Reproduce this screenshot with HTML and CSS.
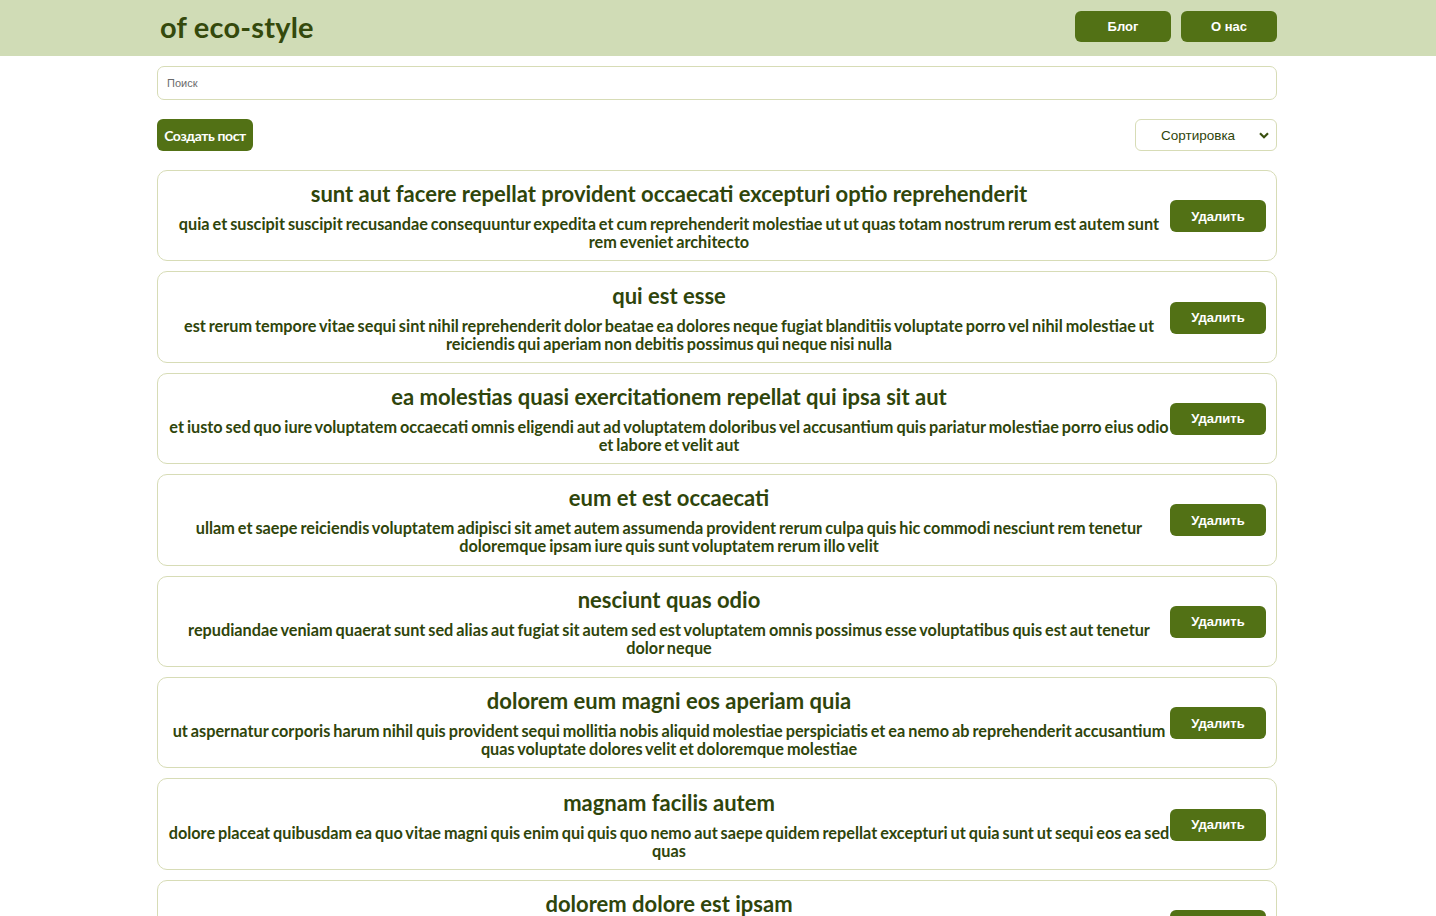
FILE: index.html
```html
<!DOCTYPE html>
<html lang="ru">
<head>
<meta charset="utf-8">
<title>of eco-style</title>
<link rel="stylesheet" href="styles.css">
</head>
<body>
<header class="header">
  <div class="header-inner">
    <div class="logo">of eco-style</div>
    <nav class="nav">
      <button class="nav-btn">Блог</button>
      <button class="nav-btn">О нас</button>
    </nav>
  </div>
</header>
<main class="main">
  <input class="search" type="text" placeholder="Поиск">
  <div class="toolbar">
    <button class="create-btn">Создать пост</button>
    <div class="sort">
      <span class="sort-label">Сортировка</span>
      <svg class="sort-arrow" width="10" height="7" viewBox="0 0 10 7"><path d="M1 1.2 L5 5.2 L9 1.2" fill="none" stroke="#3a5010" stroke-width="2.2"/></svg>
    </div>
  </div>
  <div class="posts">
    <div class="post">
      <div class="post-body">
        <h2 class="post-title">sunt aut facere repellat provident occaecati excepturi optio reprehenderit</h2>
        <p class="post-text">quia et suscipit suscipit recusandae consequuntur expedita et cum reprehenderit molestiae ut ut quas totam nostrum rerum est autem sunt rem eveniet architecto</p>
      </div>
      <button class="del-btn">Удалить</button>
    </div>
    <div class="post">
      <div class="post-body">
        <h2 class="post-title">qui est esse</h2>
        <p class="post-text">est rerum tempore vitae sequi sint nihil reprehenderit dolor beatae ea dolores neque fugiat blanditiis voluptate porro vel nihil molestiae ut reiciendis qui aperiam non debitis possimus qui neque nisi nulla</p>
      </div>
      <button class="del-btn">Удалить</button>
    </div>
    <div class="post">
      <div class="post-body">
        <h2 class="post-title">ea molestias quasi exercitationem repellat qui ipsa sit aut</h2>
        <p class="post-text">et iusto sed quo iure voluptatem occaecati omnis eligendi aut ad voluptatem doloribus vel accusantium quis pariatur molestiae porro eius odio et labore et velit aut</p>
      </div>
      <button class="del-btn">Удалить</button>
    </div>
    <div class="post">
      <div class="post-body">
        <h2 class="post-title">eum et est occaecati</h2>
        <p class="post-text">ullam et saepe reiciendis voluptatem adipisci sit amet autem assumenda provident rerum culpa quis hic commodi nesciunt rem tenetur doloremque ipsam iure quis sunt voluptatem rerum illo velit</p>
      </div>
      <button class="del-btn">Удалить</button>
    </div>
    <div class="post">
      <div class="post-body">
        <h2 class="post-title">nesciunt quas odio</h2>
        <p class="post-text">repudiandae veniam quaerat sunt sed alias aut fugiat sit autem sed est voluptatem omnis possimus esse voluptatibus quis est aut tenetur dolor neque</p>
      </div>
      <button class="del-btn">Удалить</button>
    </div>
    <div class="post">
      <div class="post-body">
        <h2 class="post-title">dolorem eum magni eos aperiam quia</h2>
        <p class="post-text">ut aspernatur corporis harum nihil quis provident sequi mollitia nobis aliquid molestiae perspiciatis et ea nemo ab reprehenderit accusantium quas voluptate dolores velit et doloremque molestiae</p>
      </div>
      <button class="del-btn">Удалить</button>
    </div>
    <div class="post">
      <div class="post-body">
        <h2 class="post-title">magnam facilis autem</h2>
        <p class="post-text">dolore placeat quibusdam ea quo vitae magni quis enim qui quis quo nemo aut saepe quidem repellat excepturi ut quia sunt ut sequi eos ea sed quas</p>
      </div>
      <button class="del-btn">Удалить</button>
    </div>
    <div class="post">
      <div class="post-body">
        <h2 class="post-title">dolorem dolore est ipsam</h2>
        <p class="post-text">dignissimos aperiam dolorem qui eum facilis quibusdam animi sint suscipit qui sint possimus cum quaerat magni maiores excepturi ipsam ut commodi dolor voluptatum modi aut vitae</p>
      </div>
      <button class="del-btn">Удалить</button>
    </div>
  </div>
</main>
</body>
</html>
```
FILE: styles.css
```css
* { box-sizing: border-box; }
body {
  margin: 0;
  padding-right: 2px;
  background: #ffffff;
  font-family: Lato, "Noto Sans", sans-serif;
  color: #2f450b;
}
.header {
  background: #d0dcb6;
  height: 56px;
  margin-right: -2px;
  padding-right: 2px;
}
.header-inner {
  width: 1120px;
  margin: 0 auto;
  height: 56px;
  display: flex;
  align-items: center;
  justify-content: space-between;
  padding-bottom: 3px;
}
.logo {
  font-family: Lato, sans-serif;
  font-weight: 700;
  font-size: 29px;
  color: #34490c;
  padding-left: 3px;
  letter-spacing: 0.2px;
}
.nav { display: flex; gap: 10px; }
.nav-btn {
  width: 96px;
  height: 31px;
  border: none;
  border-radius: 6px;
  background: #527115;
  color: #fff;
  font-family: "Liberation Sans", Arial, sans-serif;
  font-weight: 700;
  font-size: 13px;
  cursor: pointer;
}
.main {
  width: 1120px;
  margin: 0 auto;
  padding-top: 10px;
}
.search {
  display: block;
  width: 100%;
  height: 34px;
  border: 1px solid #d7dcb6;
  border-radius: 7px;
  padding: 0 9px;
  font-family: "Liberation Sans", Arial, sans-serif;
  font-size: 11px;
  color: #333;
  outline: none;
}
.search::placeholder { color: #6b6b6b; }
.toolbar {
  display: flex;
  justify-content: space-between;
  align-items: center;
  margin-top: 19px;
  margin-bottom: 19px;
}
.create-btn {
  width: 96px;
  height: 32px;
  padding: 0;
  border: none;
  border-radius: 6px;
  background: #527115;
  color: #fff;
  font-family: Lato, sans-serif;
  font-weight: 700;
  font-size: 14px;
  letter-spacing: -0.4px;
}
.sort {
  width: 142px;
  height: 32px;
  border: 1px solid #d7dcb6;
  border-radius: 6px;
  display: flex;
  align-items: center;
  justify-content: space-between;
  padding: 0 7px 0 25px;
  font-family: "Liberation Sans", Arial, sans-serif;
  font-size: 13.5px;
  color: #2f450b;
}
.posts {
  display: flex;
  flex-direction: column;
  gap: 10px;
}
.post {
  border: 1px solid #d7dcb6;
  border-radius: 10px;
  display: flex;
  align-items: center;
  padding: 10px 10px 9px;
  min-height: 91.4px;
}
.post-body {
  flex: 1;
  text-align: center;
}
.post-title {
  margin: 0;
  font-size: 22px;
  line-height: 26px;
  font-weight: 700;
  color: #2f450b;
}
.post-text {
  margin: 8px 0 0;
  font-size: 16.25px;
  word-spacing: -1px;
  line-height: 18px;
  font-weight: 700;
  color: #2f450b;
}
.del-btn {
  flex: none;
  width: 96px;
  height: 32px;
  border: none;
  border-radius: 6px;
  background: #527115;
  color: #fff;
  font-family: "Liberation Sans", Arial, sans-serif;
  font-weight: 700;
  font-size: 13px;
}
```
